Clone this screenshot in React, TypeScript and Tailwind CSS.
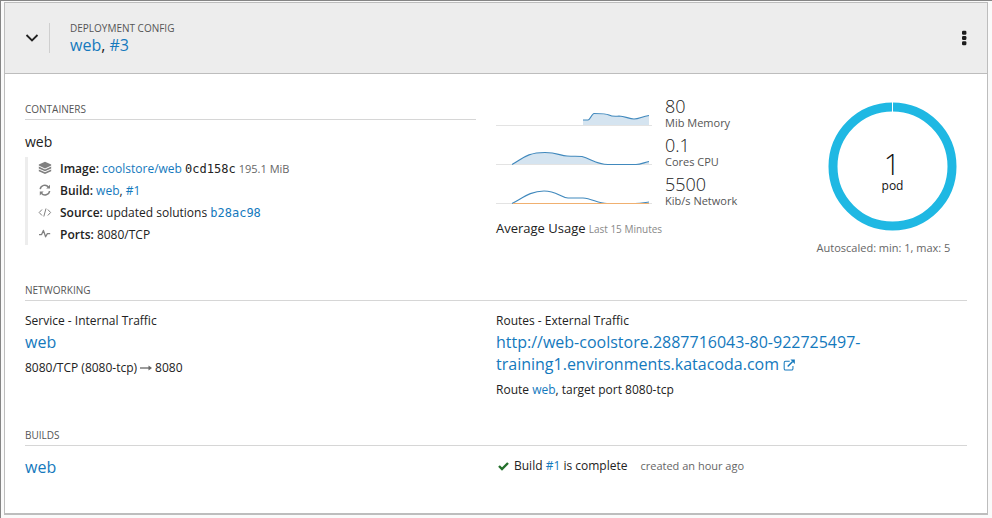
import React from 'react';

const link = 'text-[#1479bd]';

function SectionTitle({ children }: { children: React.ReactNode }) {
  return (
    <h2 className="h-[22px] border-b border-[#d6d6d6] text-[10px] leading-[22px] text-[#555]">
      {children}
    </h2>
  );
}

function DetailRow({ icon, label, children }: { icon: React.ReactNode; label: string; children: React.ReactNode }) {
  return (
    <li className="flex h-[22px] items-center">
      <span className="flex w-[22px] shrink-0 text-[#808080]">{icon}</span>
      <span className="pt-[2px] text-[12px] whitespace-nowrap">
        <b className="font-semibold">{label}</b> {children}
      </span>
    </li>
  );
}

const LayersIcon = () => (
  <svg width="14" height="14" viewBox="0 0 14 14" fill="currentColor">
    <path d="M7 .8 13.200 3.600V4.600L7 7.400.8 4.600V3.600Z" />
    <path d="M.8 5.600 7 8.400l6.200-2.800v1.800L7 10.200.8 7.400ZM.8 8.500 7 11.300l6.200-2.800v1.800L7 13.100 .8 10.300Z" />
  </svg>
);

const RefreshIcon = () => (
  <svg width="14" height="14" viewBox="0 0 14 14" fill="none" stroke="currentColor" strokeWidth="1.5">
    <path d="M2.200 6.200A4.600 4.600 0 0 1 10.400 4M11.600 8A4.600 4.600 0 0 1 3.400 10.200" />
    <path d="M12 1.800v3.800H8.200ZM1.800 12.400V8.600h3.800Z" fill="currentColor" stroke="none" />
  </svg>
);

const CodeIcon = () => (
  <svg width="14" height="14" viewBox="0 0 14 14" fill="none" stroke="currentColor" strokeWidth="1">
    <path d="M4 4.500 1.200 7.500l2.800 3M9.800 4.500l2.800 3-2.800 3M8 3.500l-2.200 8" />
  </svg>
);

const PulseIcon = () => (
  <svg width="14" height="14" viewBox="0 0 14 14" fill="none" stroke="currentColor" strokeWidth="1.3" strokeLinejoin="round">
    <path d="M1 7.600h2.600L5.400 3.400 7.600 9.800 9.400 6.600h2.800" />
  </svg>
);

interface MetricProps {
  value: string;
  unit: string;
  line: string;
  area?: string;
  accent?: boolean;
}

function Metric({ value, unit, line, area, accent }: MetricProps) {
  return (
    <div className="flex h-[39px]">
      <svg className="mr-[13px] shrink-0" width="156" height="39" viewBox="0 0 156 39" fill="none">
        <path d="M0 29.500H156" stroke="#e3e3e3" />
        {area && <path d={area} fill="#d5e4f0" />}
        <path d={line} stroke="#4189bd" strokeWidth="1.200" />
        {accent && <path d="M17 29.500H153" stroke="#f0b070" strokeWidth="1.200" />}
      </svg>
      <div className="whitespace-nowrap">
        <div className="h-[20px] text-[18px] leading-[20px] font-light text-[#222]">{value}</div>
        <div className="h-[14px] text-[11px] leading-[14px] text-[#555]">{unit}</div>
      </div>
    </div>
  );
}

const memory = 'M87 24h5c2 0 4-6.500 6-6.500 8 0 12 0 15 1.500s6 1.500 10 1c6 0 10 3 15 3s8-2.500 15-3.500';
const cpu = 'M16 29.500c10-5 14-12 33-12 12 0 15 3 22 3.500s10 0 15 .5c9 2.500 15 8 26 8h28c5 0 9-2.500 13-3';
const network = 'M16 29.500c10-5 18-12.500 32-12.500 13 0 16 6.500 24 7h15c9 .5 15 5.500 24 5.500h28c6 0 10-1 14-1.500';

export default function App() {
  return (
    <div className="h-[518px] w-[992px] overflow-hidden border-t border-l border-[#858585] bg-[#fafafa] pt-px pl-[3px] font-['Open_Sans',sans-serif] text-[12px] text-[#222]">
      <main className="h-[513px] w-[984px] border border-b-2 border-[#bdbdbd] bg-white">
        <header className="flex h-[71px] items-center border-b border-[#bdbdbd] bg-[#ededed]">
          <svg className="ml-[20px] shrink-0" width="14" height="10" viewBox="0 0 14 10" fill="none" stroke="#222" strokeWidth="1.800">
            <path d="m1.500 2 5.500 5.500L12.500 2" />
          </svg>
          <div className="ml-[10px] h-[30px] w-px bg-[#cfcfcf]" />
          <div className="ml-[20px] pb-[2px] whitespace-nowrap">
            <div className="h-[16px] text-[10px] leading-[16px] text-[#555]">DEPLOYMENT CONFIG</div>
            <div className="h-[18px] text-[16px] leading-[18px]">
              <a className={link}>web</a>, <a className={link}>#3</a>
            </div>
          </div>
          <svg className="mr-[20px] ml-auto shrink-0" width="5" height="16" viewBox="0 0 5 16" fill="#1c1c1c">
            <rect x="0" y="0.800" width="4.400" height="4" rx="1.200" />
            <rect x="0" y="6" width="4.400" height="4" rx="1.200" />
            <rect x="0" y="11.200" width="4.400" height="4" rx="1.200" />
          </svg>
        </header>

        <div className="px-[20px]">
          <section className="flex h-[205px]">
            <div className="w-[451px] shrink-0 pt-[24px]">
              <SectionTitle>CONTAINERS</SectionTitle>
              <div className="mt-[12px] mb-[5px] h-[20px] text-[14px] leading-[20px]">web</div>
              <ul className="border-l-[3px] border-[#ededed] pl-[10px]">
                <DetailRow icon={<LayersIcon />} label="Image:">
                  <a className={link}>coolstore/web</a>{' '}
                  <span className="font-['DejaVu_Sans_Mono',monospace] text-[12px]">0cd158c</span>{' '}
                  <span className="text-[11px] text-[#666]">195.1 MiB</span>
                </DetailRow>
                <DetailRow icon={<RefreshIcon />} label="Build:">
                  <a className={link}>web</a>, <a className={link}>#1</a>
                </DetailRow>
                <DetailRow icon={<CodeIcon />} label="Source:">
                  updated solutions{' '}
                  <a className="font-['DejaVu_Sans_Mono',monospace] text-[12px] text-[#1479bd]">b28ac98</a>
                </DetailRow>
                <DetailRow icon={<PulseIcon />} label="Ports:">8080/TCP</DetailRow>
              </ul>
            </div>
            <div className="ml-[20px] w-[300px] shrink-0 pt-[22px]">
              <Metric value="80" unit="Mib Memory" line={memory} area={memory + 'V29H87Z'} />
              <Metric value="0.1" unit="Cores CPU" line={cpu} area={cpu + 'V29H16Z'} />
              <Metric value="5500" unit="Kib/s Network" line={network} accent />
              <div className="mt-[5px] h-[20px] leading-[20px] whitespace-nowrap">
                <span className="text-[13px]">Average Usage</span>{' '}
                <span className="text-[10px] text-[#888]">Last 15 Minutes</span>
              </div>
            </div>
            <div className="ml-[4px] flex w-[184px] shrink-0 flex-col items-center pt-[27px]">
              <svg className="shrink-0" width="130" height="130" viewBox="0 0 130 130">
                <circle cx="65.500" cy="65.500" r="59.500" fill="none" stroke="#1fb8e3" strokeWidth="9" />
                <path d="M65.500 0v11" stroke="#fff" strokeWidth="1" />
                <text x="65" y="74" textAnchor="middle" fontSize="29" className="font-light" fill="#111">1</text>
                <text x="65.500" y="89" textAnchor="middle" fontSize="12" fill="#111">pod</text>
              </svg>
              <div className="mt-[8px] mr-[17px] h-[18px] text-[11px] leading-[18px] whitespace-nowrap text-[#666]">
                Autoscaled: min: 1, max: 5
              </div>
            </div>
          </section>

          <section className="h-[145px]">
            <SectionTitle>NETWORKING</SectionTitle>
            <div className="flex whitespace-nowrap">
              <div className="w-[471px] shrink-0 pt-[11px]">
                <div className="h-[18px] leading-[18px]">Service - Internal Traffic</div>
                <div className="h-[24px] text-[16px] leading-[24px]"><a className={link}>web</a></div>
                <div className="mt-[5px] flex h-[18px] items-center leading-[18px]">
                  8080/TCP (8080-tcp)
                  <svg className="mx-[3px]" width="12" height="8" viewBox="0 0 12 8">
                    <path d="M0 4h9" stroke="#666" strokeWidth="1.300" />
                    <path d="m8.500 1.500 3.500 2.500-3.500 2.500Z" fill="#666" />
                  </svg>
                  8080
                </div>
              </div>
              <div className="pt-[11px]">
                <div className="h-[18px] leading-[18px]">Routes - External Traffic</div>
                <a className="mt-[1px] block h-[44px] text-[16px] leading-[22px] text-[#1479bd]">
                  <span>http://web-coolstore.2887716043-80-922725497-</span>
                  <br />
                  <span>training1.environments.katacoda.com</span>
                  <svg className="ml-[4px] inline-block align-[-1px]" width="12.500" height="12" viewBox="0 0 13 13" fill="none" stroke="currentColor">
                    <path d="M7 2.500H2.500Q1 2.500 1 4v6.500Q1 12 2.500 12h6.500q1.500 0 1.500-1.500V7.500" strokeWidth="1.100" />
                    <path d="m4.800 8.200 5.400-5.400" strokeWidth="1.600" />
                    <path d="M7.800.6h4.700v4.700Z" fill="currentColor" stroke="none" />
                  </svg>
                </a>
                <div className="mt-[6px] h-[18px] leading-[18px]">
                  Route <a className={link}>web</a>, target port 8080-tcp
                </div>
              </div>
            </div>
          </section>

          <section>
            <SectionTitle>BUILDS</SectionTitle>
            <div className="flex pt-[9px] whitespace-nowrap">
              <div className="w-[471px] shrink-0 text-[16px] leading-[24px]"><a className={link}>web</a></div>
              <div className="flex h-[22px] items-center">
                <svg className="mr-[5px] ml-[2px]" width="11" height="10" viewBox="0 0 11 10" fill="none">
                  <path d="m1 5 3 3L10 2" stroke="#24702c" strokeWidth="2.400" />
                </svg>
                <span>Build <a className={link}>#1</a> is complete</span>
                <span className="ml-[13px] text-[11px] text-[#666]">created an hour ago</span>
              </div>
            </div>
          </section>
        </div>
      </main>
    </div>
  );
}
